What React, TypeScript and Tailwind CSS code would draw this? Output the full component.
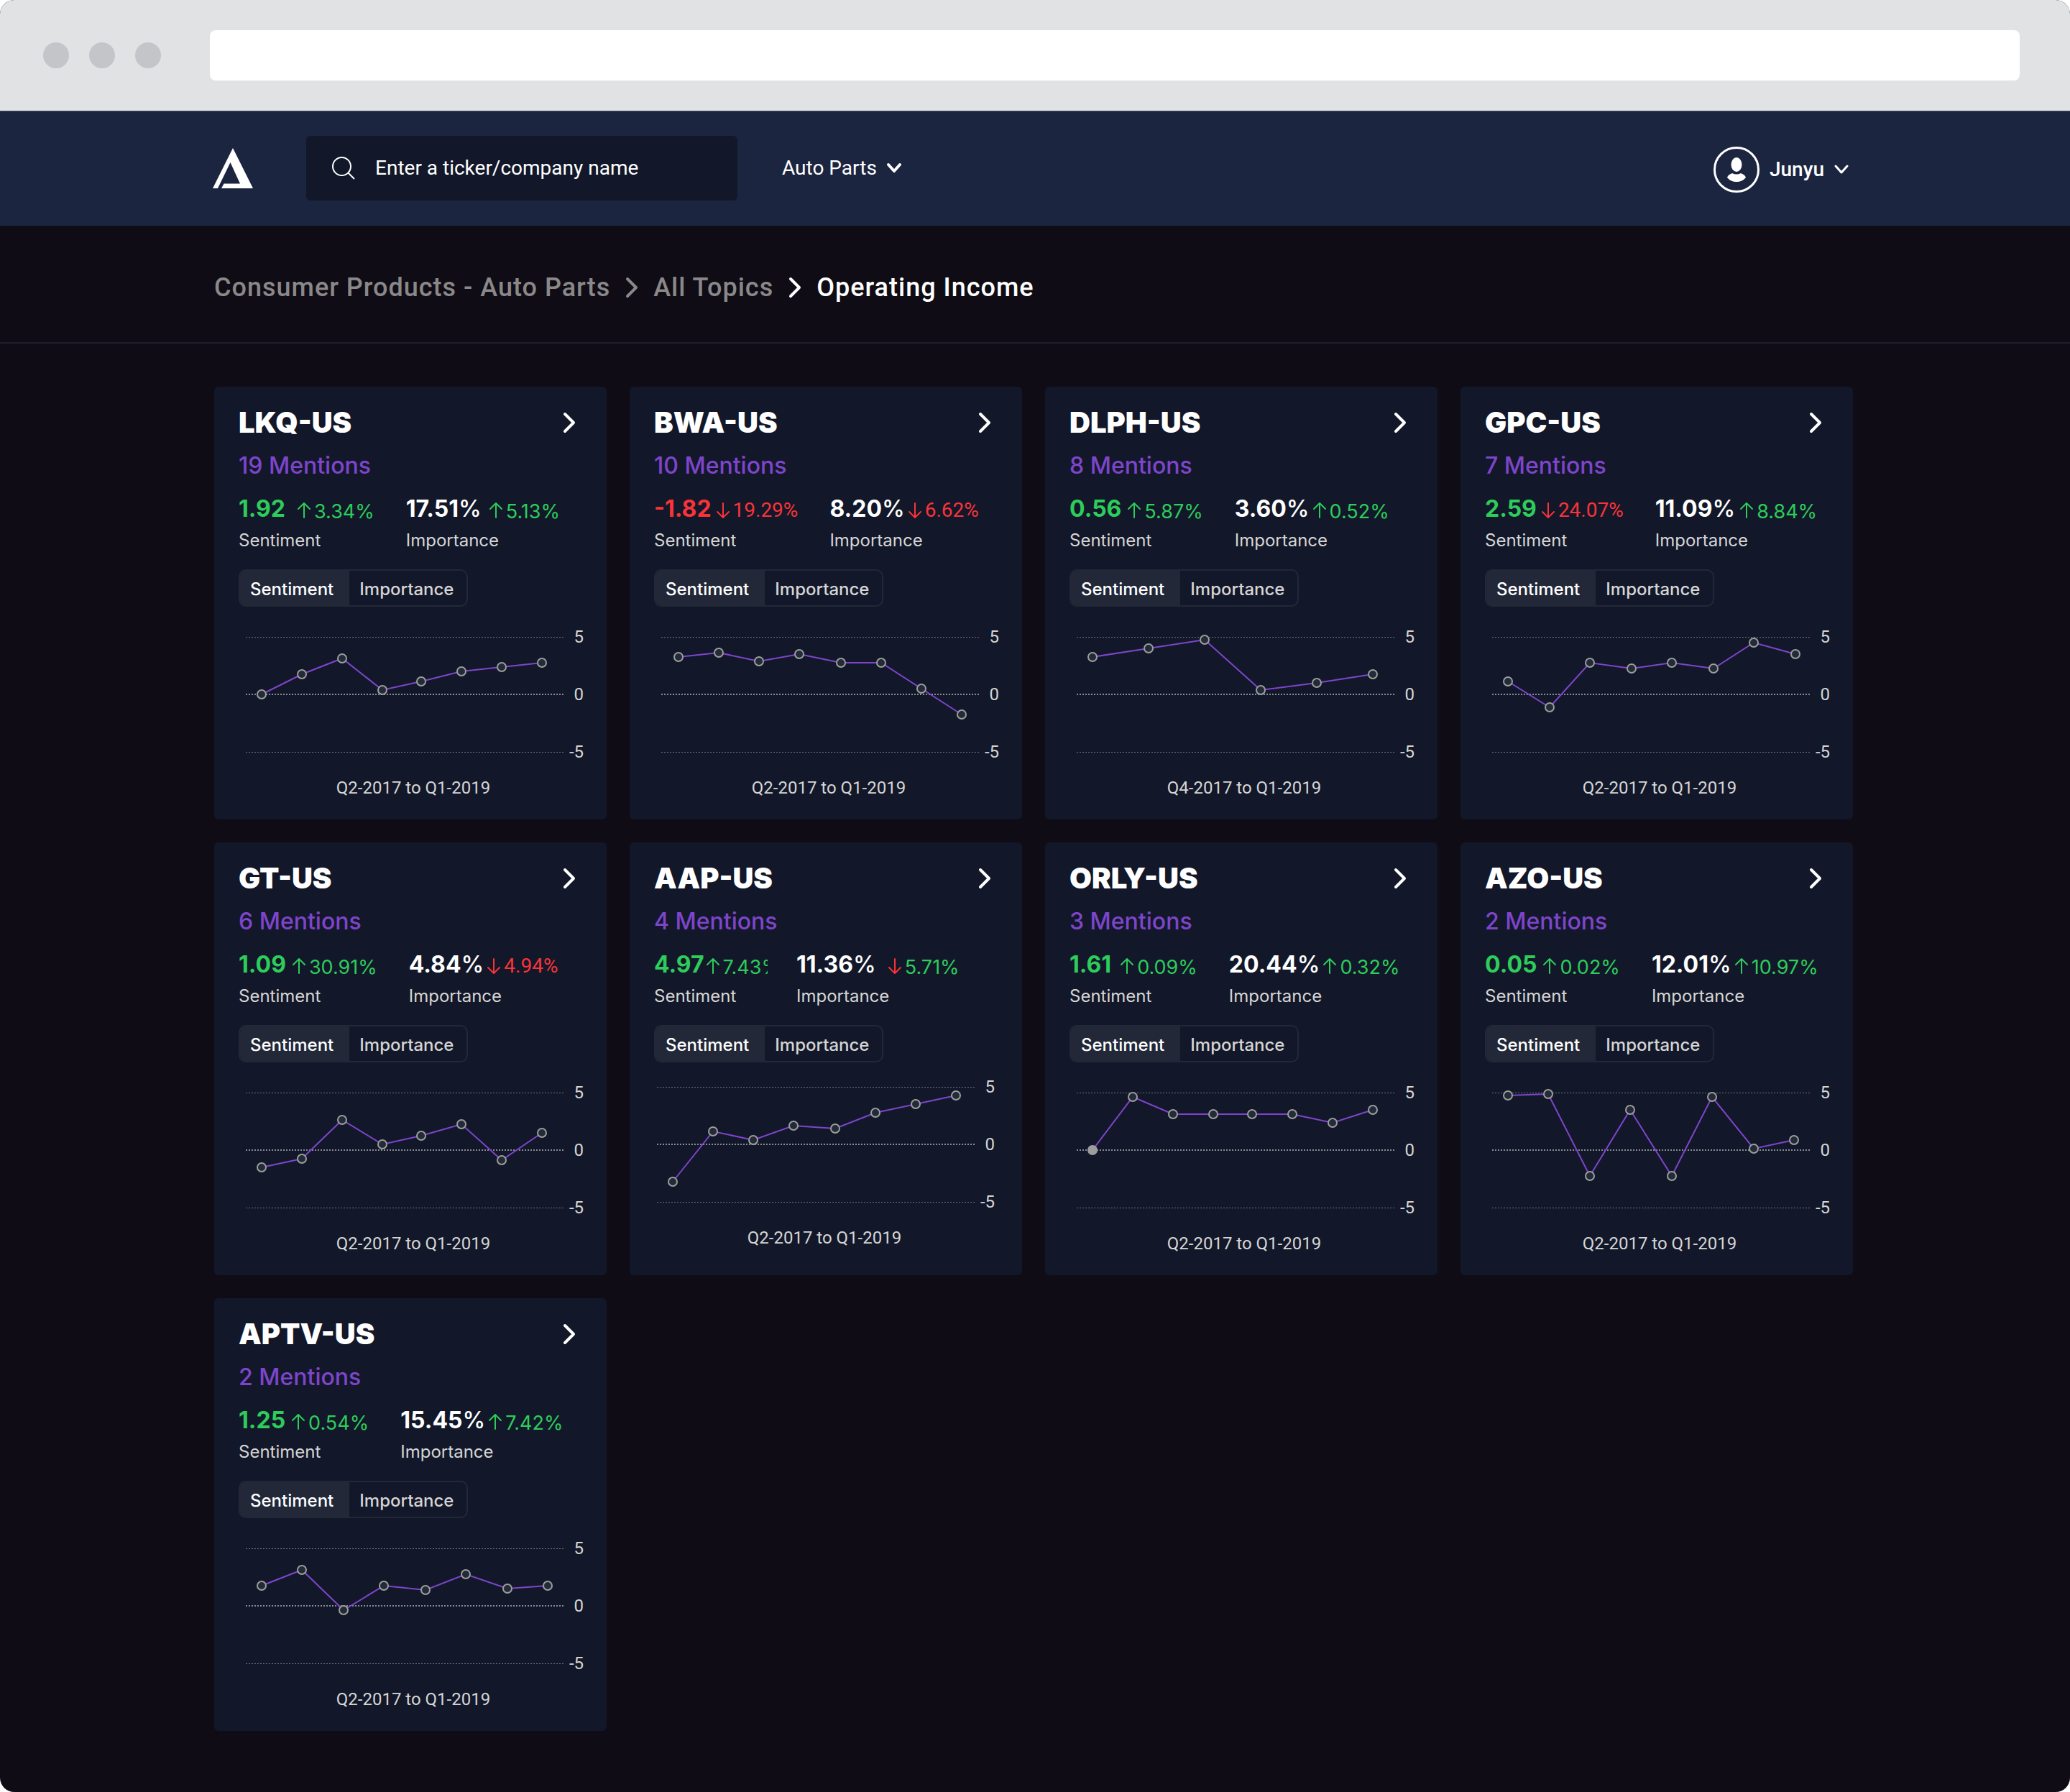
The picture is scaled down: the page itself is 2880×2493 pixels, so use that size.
import { useState } from "react";

type Point = [number, number];

type Change = { dir: "up" | "down"; text: string; tone?: "up" | "down"; gap?: string; clip?: boolean };

type Company = {
  ticker: string;
  mentions: number;
  sentiment: string;
  sentimentChange: Change;
  importance: string;
  importanceChange: Change;
  period: string;
  points: Point[];
  solidStart?: boolean;
  shifted?: boolean;
};

/* Points are measured from the left end of the zero line, with y growing downwards. */
const companies: Company[] = [
  {
    ticker: "LKQ-US",
    mentions: 19,
    sentiment: "1.92",
    sentimentChange: { dir: "up", text: "3.34%", gap: "gap-4" },
    importance: "17.51",
    importanceChange: { dir: "up", text: "5.13%", gap: "gap-2.5" },
    period: "Q2-2017 to Q1-2019",
    points: [[22, 0], [78, -28], [134, -50], [190, -6], [244, -18], [300, -32], [356, -38], [412, -44]],
  },
  {
    ticker: "BWA-US",
    mentions: 10,
    sentiment: "-1.82",
    sentimentChange: { dir: "down", text: "19.29%", gap: "gap-1.5" },
    importance: "8.20",
    importanceChange: { dir: "down", text: "6.62%" },
    period: "Q2-2017 to Q1-2019",
    points: [[24, -52], [80, -58], [136, -46], [192, -56], [250, -44], [306, -44], [362, -8], [418, 28]],
  },
  {
    ticker: "DLPH-US",
    mentions: 8,
    sentiment: "0.56",
    sentimentChange: { dir: "up", text: "5.87%" },
    importance: "3.60",
    importanceChange: { dir: "up", text: "0.52%" },
    period: "Q4-2017 to Q1-2019",
    points: [[22, -52], [100, -64], [178, -76], [256, -6], [334, -16], [412, -28]],
  },
  {
    ticker: "GPC-US",
    mentions: 7,
    sentiment: "2.59",
    sentimentChange: { dir: "down", text: "24.07%", gap: "gap-1.5" },
    importance: "11.09",
    importanceChange: { dir: "up", text: "8.84%", gap: "gap-1.5" },
    period: "Q2-2017 to Q1-2019",
    points: [[22, -18], [80, 18], [136, -44], [194, -36], [250, -44], [308, -36], [364, -72], [422, -56]],
  },
  {
    ticker: "GT-US",
    mentions: 6,
    sentiment: "1.09",
    sentimentChange: { dir: "up", text: "30.91%" },
    importance: "4.84",
    importanceChange: { dir: "down", text: "4.94%" },
    period: "Q2-2017 to Q1-2019",
    points: [[22, 24], [78, 12], [134, -42], [190, -8], [244, -20], [300, -36], [356, 14], [412, -24]],
  },
  {
    ticker: "AAP-US",
    mentions: 4,
    sentiment: "4.97",
    sentimentChange: { dir: "up", text: "7.43%", gap: "gap-0.5", clip: true },
    importance: "11.36",
    importanceChange: { dir: "down", text: "5.71%", tone: "up", gap: "gap-4" },
    period: "Q2-2017 to Q1-2019",
    points: [[22, 52], [78, -18], [134, -6], [190, -26], [248, -22], [304, -44], [360, -56], [416, -68]],
    shifted: true,
  },
  {
    ticker: "ORLY-US",
    mentions: 3,
    sentiment: "1.61",
    sentimentChange: { dir: "up", text: "0.09%", gap: "gap-3" },
    importance: "20.44",
    importanceChange: { dir: "up", text: "0.32%" },
    period: "Q2-2017 to Q1-2019",
    points: [[22, 0], [78, -74], [134, -50], [190, -50], [244, -50], [300, -50], [356, -38], [412, -56]],
    solidStart: true,
  },
  {
    ticker: "AZO-US",
    mentions: 2,
    sentiment: "0.05",
    sentimentChange: { dir: "up", text: "0.02%" },
    importance: "12.01",
    importanceChange: { dir: "up", text: "10.97%" },
    period: "Q2-2017 to Q1-2019",
    points: [[22, -76], [78, -78], [136, 36], [192, -56], [250, 36], [306, -74], [364, -2], [420, -14]],
  },
  {
    ticker: "APTV-US",
    mentions: 2,
    sentiment: "1.25",
    sentimentChange: { dir: "up", text: "0.54%" },
    importance: "15.45",
    importanceChange: { dir: "up", text: "7.42%" },
    period: "Q2-2017 to Q1-2019",
    points: [[22, -28], [78, -50], [136, 6], [192, -28], [250, -22], [306, -44], [364, -24], [420, -28]],
  },
];

function ChevronRight() {
  return (
    <svg width="20" height="32" viewBox="0 0 20 32" fill="none" stroke="currentColor" strokeWidth="4" strokeLinecap="round" strokeLinejoin="round" aria-hidden="true">
      <path d="M4 4 L16 16 L4 28" />
    </svg>
  );
}

function Arrow({ dir }: { dir: "up" | "down" }) {
  return (
    <svg width="20" height="24" viewBox="0 0 20 24" fill="none" stroke="currentColor" strokeWidth="2" strokeLinecap="round" strokeLinejoin="round" className="shrink-0" aria-hidden="true">
      {dir === "up" ? <path d="M10 22 V2 M2 10 L10 2 L18 10" /> : <path d="M10 2 V22 M2 14 L10 22 L18 14" />}
    </svg>
  );
}

function Metric({ value, unit, label, change, signed }: { value: string; unit?: string; label: string; change: Change; signed?: boolean }) {
  const negative = value.startsWith("-");
  const valueColor = signed ? (negative ? "text-[#f93338]" : "text-[#2dcc5b]") : "text-white";
  const arrowColor = change.dir === "up" ? "text-[#2dcc5b]" : "text-[#f93338]";
  const tone = change.tone ?? change.dir;
  const textStyle =
    tone === "up" ? "text-[27px] text-[#2dcc5b] font-['Inter',sans-serif] pt-1" : "text-[28px] text-[#f93338] font-['Roboto',sans-serif]";
  return (
    <div className={change.clip ? "-mr-1 w-[158px] overflow-hidden" : ""}>
      <dd className={`flex h-10 items-center ${change.gap ?? (unit ? "gap-1" : "gap-2")}`}>
        <span className={`text-[32px] leading-10 font-bold ${valueColor}`}>
          {value}
          {unit && <span className="font-medium">{unit}</span>}
        </span>
        <span className="flex items-center gap-1 pt-1">
          <span className={arrowColor}>
            <Arrow dir={change.dir} />
          </span>
          <span className={`leading-9 ${textStyle}`}>{change.text}</span>
        </span>
      </dd>
      <dt className="mt-2 text-2xl leading-8 text-[#d6d5d5]">{label}</dt>
    </div>
  );
}

function Chart({ points, solidStart, label }: { points: Point[]; solidStart?: boolean; label: string }) {
  return (
    <svg viewBox="0 0 480 200" className="block w-full overflow-visible" role="img" aria-label={label}>
      <g stroke="#6f727c" strokeWidth="1">
        <path d="M10 20.5 H452" strokeDasharray="2 2" />
        <path d="M10 180.5 H452" strokeDasharray="2 2" />
      </g>
      <path d="M10 100 H452" stroke="#8a8c94" strokeWidth="2" strokeDasharray="2 2" />
      <g fill="#d6d5d5" fontSize="24" fontFamily="Roboto, sans-serif" textAnchor="end">
        <text x="480" y="28">5</text>
        <text x="480" y="108">0</text>
        <text x="480" y="188">-5</text>
      </g>
      <polyline points={points.map(([x, y]) => `${x + 10},${y + 100}`).join(" ")} fill="none" stroke="#7e45cc" strokeWidth="2" />
      {points.map(([x, y], i) => (
        <circle key={i} cx={x + 10} cy={y + 100} r="6" fill={solidStart && i === 0 ? "#9e9d9d" : "#222b38"} stroke="#9e9d9d" strokeWidth="2" />
      ))}
    </svg>
  );
}

function Card({ c }: { c: Company }) {
  const [tab, setTab] = useState<"Sentiment" | "Importance">("Sentiment");
  return (
    <article className="flex flex-col rounded-md bg-[#121829] pt-[26px] pr-8 pb-7 pl-[34px]">
      <div className="flex items-center justify-between pr-2.5">
        <h2 className="text-[40px] leading-[48px] font-black text-white">{c.ticker}</h2>
        <a href={`#${c.ticker}`} aria-label={`Open ${c.ticker}`} className="text-white">
          <ChevronRight />
        </a>
      </div>
      <p className="mt-4 text-[32px] leading-10 font-medium text-[#7e45cc]">{c.mentions} Mentions</p>
      <dl className="mt-5 flex gap-11 whitespace-nowrap">
        <Metric value={c.sentiment} label="Sentiment" change={c.sentimentChange} signed />
        <Metric value={c.importance} unit="%" label="Importance" change={c.importanceChange} />
      </dl>
      <div className="mt-6 flex h-[52px] self-start overflow-hidden rounded-[10px] border-2 border-[#222838] text-2xl font-medium">
        {(["Sentiment", "Importance"] as const).map((name) => (
          <button
            key={name}
            type="button"
            aria-pressed={tab === name}
            onClick={() => setTab(name)}
            className={tab === name ? "bg-[#222838] pt-1 pr-[22px] pl-3.5 text-white" : "pt-1 pr-[18px] pl-3.5 text-[#d6d5d5]"}
          >
            {name}
          </button>
        ))}
      </div>
      <figure className={c.shifted ? "mt-3.5 mr-1.5 -ml-1.5" : "mt-[22px]"}>
        <Chart points={c.points} solidStart={c.solidStart} label={`${c.ticker} ${tab}, ${c.period}`} />
        <figcaption className="mt-3.5 pl-1.5 text-center font-['Roboto',sans-serif] text-2xl leading-8 text-[#d6d5d5]">{c.period}</figcaption>
      </figure>
    </article>
  );
}

export default function App() {
  return (
    <div className="bg-white font-['Inter',sans-serif]">
      <div className="flex min-h-screen flex-col overflow-hidden rounded-[20px] bg-[#0f0c15]">
        <div className="flex h-[154px] items-center bg-[#e1e2e4] pr-[70px] pl-[60px]">
          <div className="flex gap-7">
            <span className="size-9 rounded-full bg-[#c4c5c9]" />
            <span className="size-9 rounded-full bg-[#c4c5c9]" />
            <span className="size-9 rounded-full bg-[#c4c5c9]" />
          </div>
          <input type="text" aria-label="Address" className="ml-[68px] h-[70px] min-w-0 flex-1 rounded-lg bg-white px-6 text-2xl outline-none" />
        </div>

        <header className="flex h-40 items-center border-t border-[#4a5266] bg-[#1c2540] pr-[308px] pb-0.5 pl-[296px] font-['Roboto',sans-serif] text-[28px] text-white">
          <a href="#home" aria-label="Home">
            <svg width="56" height="56" viewBox="0 0 56 56" fill="white" aria-hidden="true">
              <path d="M28 0 L56 56 H12 L15.500 49.500 H38 L24.500 20 L7 56 H0 Z" />
            </svg>
          </a>
          <label className="ml-[74px] flex h-[90px] w-[600px] items-center rounded-md bg-[#121829] pl-9">
            <svg width="32" height="32" viewBox="0 0 32 32" fill="none" stroke="white" strokeWidth="2" aria-hidden="true">
              <circle cx="13.500" cy="13.500" r="12.500" />
              <path d="M22 22 L31 31" />
            </svg>
            <input
              type="text"
              aria-label="Search"
              placeholder="Enter a ticker/company name"
              className="ml-7 min-w-0 flex-1 bg-transparent outline-none placeholder:text-white placeholder:opacity-100"
            />
          </label>
          <div className="relative ml-[62px] flex items-center">
            <select aria-label="Industry" className="appearance-none bg-transparent pr-9 outline-none">
              <option>Auto Parts</option>
            </select>
            <svg width="24" height="16" viewBox="0 0 24 16" fill="none" stroke="white" strokeWidth="4" strokeLinecap="round" strokeLinejoin="round" className="pointer-events-none absolute right-0" aria-hidden="true">
              <path d="M4 3 L12 12 L20 3" />
            </svg>
          </div>
          <button type="button" className="ml-auto flex items-center gap-3.5 pt-1 font-medium">
            <svg width="64" height="64" viewBox="0 0 64 64" fill="white" aria-hidden="true">
              <circle cx="32" cy="32" r="30.500" fill="none" stroke="white" strokeWidth="3" />
              <ellipse cx="32" cy="25" rx="7.500" ry="10" />
              <path d="M26 37 Q32 40 38 37 Q44 39 45 43 Q40 49 32 49 Q24 49 19 43 Q20 39 26 37 Z" />
            </svg>
            Junyu
            <svg width="20" height="14" viewBox="0 0 20 14" fill="none" stroke="white" strokeWidth="3" strokeLinecap="round" strokeLinejoin="round" aria-hidden="true">
              <path d="M2 2 L10 11 L18 2" />
            </svg>
          </button>
        </header>

        <nav aria-label="Breadcrumb" className="border-b-2 border-[#1d1e29] pt-[62px] pr-[302px] pb-[52px] pl-[298px]">
          <ol className="flex items-center gap-5 font-['Roboto',sans-serif] text-4xl leading-[48px] font-medium tracking-[1px] text-[#8a8889]">
            <li><a href="#industry">Consumer Products - Auto Parts</a></li>
            <li aria-hidden="true"><ChevronRight /></li>
            <li><a href="#topics">All Topics</a></li>
            <li aria-hidden="true" className="text-white"><ChevronRight /></li>
            <li aria-current="page" className="text-white">Operating Income</li>
          </ol>
        </nav>

        <main className="grid grid-cols-4 gap-8 pt-[60px] pr-[302px] pb-20 pl-[298px]">
          {companies.map((c) => (
            <Card key={c.ticker} c={c} />
          ))}
        </main>
      </div>
    </div>
  );
}
